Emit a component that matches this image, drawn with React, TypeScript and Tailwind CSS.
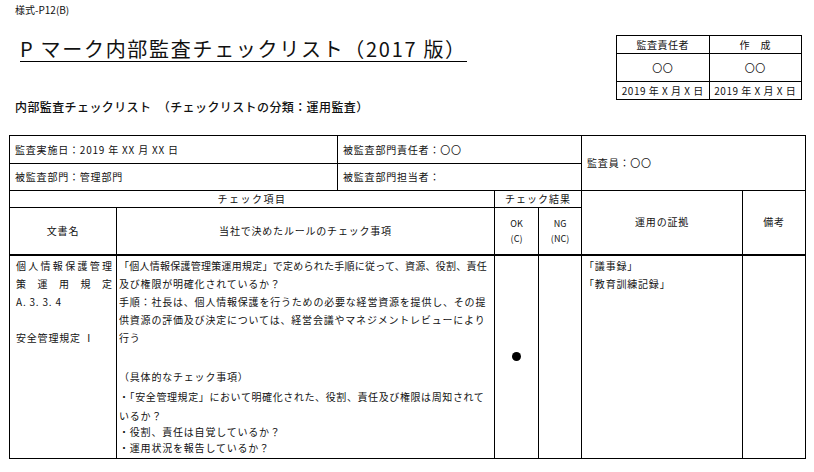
import React from 'react'

const spread = (s: string) => s.split('').map((c, i) => <span key={i}>{c}</span>)

export default function App() {
  const td = 'border border-black px-[5px]'
  return (
    <div className="w-[814px] h-[472px] overflow-hidden bg-white text-[#111] font-['Noto_Sans_CJK_JP',sans-serif]">
      <div className="flex items-start">
        <div className="flex-1">
          <div className="pl-[15px] pt-[4px] text-[10px] leading-[12px]">様式-P12(B)</div>
          <div className="ml-[20px] mt-[21px] w-[447px] border-b border-black text-[20px] leading-[24px] tracking-[1.7px]">
            P マーク内部監査チェックリスト（2017 版）
          </div>
          <div className="ml-[15px] mt-[38px] text-[12px] leading-[14px] font-medium tracking-[0.4px]">
            内部監査チェックリスト　（チェックリストの分類：運用監査）
          </div>
        </div>
        <table className="mt-[35px] mr-[12px] w-[186px] table-fixed border-collapse text-[10px] tracking-[0.5px]">
          <tbody>
            <tr className="h-[18px]">
              <td className="border border-black text-center">監査責任者</td>
              <td className="border border-black text-center">作　成</td>
            </tr>
            <tr className="h-[28px]">
              <td className="border border-black text-center">〇〇</td>
              <td className="border border-black text-center">〇〇</td>
            </tr>
            <tr className="h-[18px]">
              <td className="border border-black text-center">2019 年 X 月 X 日</td>
              <td className="border border-black text-center">2019 年 X 月 X 日</td>
            </tr>
          </tbody>
        </table>
      </div>

      <table className="ml-[9px] mt-[21px] w-[796px] table-fixed border-collapse text-[10px] leading-[14px] tracking-[0.8px]">
        <colgroup>
          <col className="w-[107px]" />
          <col className="w-[221px]" />
          <col className="w-[157px]" />
          <col className="w-[44px]" />
          <col className="w-[43px]" />
          <col className="w-[161px]" />
          <col className="w-[63px]" />
        </colgroup>
        <tbody>
          <tr className="h-[28px]">
            <td colSpan={2} className={td}>監査実施日：2019 年 XX 月 XX 日</td>
            <td colSpan={3} className={td}>被監査部門責任者：〇〇</td>
            <td colSpan={2} rowSpan={2} className={td}>監査員：〇〇</td>
          </tr>
          <tr className="h-[27px]">
            <td colSpan={2} className={td}>被監査部門：管理部門</td>
            <td colSpan={3} className={td}>被監査部門担当者：</td>
          </tr>
          <tr className="h-[17px]">
            <td colSpan={3} className="border border-black text-center tracking-[1.5px]">チェック項目</td>
            <td colSpan={2} className="border border-black text-center tracking-[1px]">チェック結果</td>
            <td rowSpan={2} className="border border-black border-b-2 text-center">運用の証拠</td>
            <td rowSpan={2} className="border border-black border-b-2 text-center">備考</td>
          </tr>
          <tr className="h-[47px]">
            <td className="border border-black border-b-2 text-center">文書名</td>
            <td colSpan={2} className="border border-black border-b-2 text-center">当社で決めたルールのチェック事項</td>
            <td className="border border-black border-b-2 text-center text-[9px] leading-[15px] tracking-normal">OK<br />(C)</td>
            <td className="border border-black border-b-2 text-center text-[9px] leading-[15px] tracking-normal">NG<br />(NC)</td>
          </tr>
          <tr className="h-[204px]">
            <td className="border border-black align-top pl-[6px] pr-[4px] pt-[1px] leading-[18px]">
              <div className="flex justify-between tracking-normal">{spread('個人情報保護管理')}</div>
              <div className="flex justify-between tracking-normal">{spread('策運用規定')}</div>
              <div>A. 3. 3. 4</div>
              <div>&nbsp;</div>
              <div>安全管理規定 Ⅰ</div>
            </td>
            <td colSpan={2} className="border border-black align-top pl-[2px] pr-0 pt-[1px] whitespace-nowrap">
              <div className="leading-[18px]">
                <div className="tracking-[0.25px]">「個人情報保護管理策運用規定」で定められた手順に従って、資源、役割、責任</div>
                <div>及び権限が明確化されているか？</div>
                <div>手順：社長は、個人情報保護を行うための必要な経営資源を提供し、その提</div>
                <div>供資源の評価及び決定については、経営会議やマネジメントレビューにより</div>
                <div>行う</div>
              </div>
              <div className="mt-[22px] leading-[16px]">
                <div>（具体的なチェック事項）</div>
                <div className="mt-[4px] tracking-[0.6px]">・「安全管理規定」において明確化された、役割、責任及び権限は周知されて</div>
                <div className="mt-[3px]">いるか？</div>
                <div>・役割、責任は自覚しているか？</div>
                <div>・運用状況を報告しているか？</div>
              </div>
            </td>
            <td className="border border-black">
              <div className="mx-auto w-[9px] h-[9px] rounded-full bg-black" />
            </td>
            <td className="border border-black" />
            <td className="border border-black align-top pl-[2px] pt-[1px] leading-[18px]">
              <div>「議事録」</div>
              <div>「教育訓練記録」</div>
            </td>
            <td className="border border-black" />
          </tr>
        </tbody>
      </table>
    </div>
  )
}
